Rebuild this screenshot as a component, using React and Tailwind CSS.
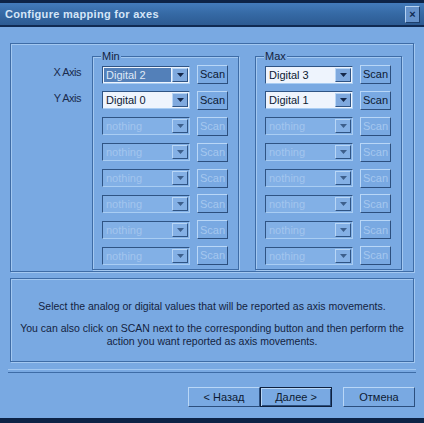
import React from 'react';

const FONT = { fontFamily: '"Liberation Sans", Arial, sans-serif' };

const MIN_ROWS = ['Digital 2', 'Digital 0', null, null, null, null, null, null];
const MAX_ROWS = ['Digital 3', 'Digital 1', null, null, null, null, null, null];

function Arrow({ faded }) {
  return (
    <svg width="7" height="4" viewBox="0 0 7 4">
      <path d="M0 0h7L3.5 4z" fill={faded ? '#3d5f8c' : '#15284a'} />
    </svg>
  );
}

function Combo({ value, selected }) {
  const enabled = value !== null;
  return (
    <div
      className={
        'flex h-[18px] w-[88px] items-stretch border border-t-[#2f5484] border-l-[#2f5484] border-r-[#a9cdf3] border-b-[#a9cdf3] ' +
        (enabled ? 'bg-[#eef4fd]' : 'bg-[#82b0e6]')
      }
    >
      <div className="flex flex-1 items-center py-[1px] pl-[1px]">
        {enabled ? (
          <span
            className={
              'flex h-full items-center px-[2px] text-[11px] leading-[14px] ' +
              (selected ? 'flex-1 bg-[#5380b9] text-[#dfe9f7]' : 'text-[#0d1a33]')
            }
          >
            {value}
          </span>
        ) : (
          <span className="px-[2px] text-[11px] leading-[14px] text-[#a2c5ee]">nothing</span>
        )}
      </div>
      <div
        className={
          'm-[1px] flex w-[16px] items-center justify-center border border-t-[#b8d6f6] border-l-[#b8d6f6] border-r-[#2f5484] border-b-[#2f5484] ' +
          (enabled ? 'bg-[#7fa9de]' : 'bg-[#84b0e5]')
        }
      >
        <Arrow faded={!enabled} />
      </div>
    </div>
  );
}

function ScanButton({ enabled }) {
  return (
    <div
      className={
        'flex h-[19px] w-[31px] items-center justify-center border border-t-[#b9d7f7] border-l-[#b9d7f7] border-r-[#2c4f7e] border-b-[#2c4f7e] text-[11px] ' +
        (enabled ? 'text-[#0d1a33]' : 'text-[#a5c7ef]')
      }
    >
      Scan
    </div>
  );
}

function Group({ title, rows }) {
  return (
    <div className="relative h-[214px] w-[147px] border border-[#3e6ca6] shadow-[inset_1px_1px_0_#a3c8f1,1px_1px_0_#a3c8f1]">
      <span className="absolute -top-[8px] left-[8px] bg-[#79a9e2] px-[1px] text-[11px] leading-[14px] text-[#13233f]">
        {title}
      </span>
      <div className="flex flex-col gap-[6.9px] pl-[9px] pt-[8px]">
        {rows.map((v, i) => (
          <div key={i} className="flex items-center gap-[7px]">
            <Combo value={v} selected={i === 0 && title === 'Min'} />
            <ScanButton enabled={v !== null} />
          </div>
        ))}
      </div>
    </div>
  );
}

function DialogButton({ label, focused }) {
  return (
    <div
      className={
        'flex h-[20px] w-[72px] items-center justify-center text-[11px] text-[#0d1a33] ' +
        (focused
          ? 'border border-[#0f213f] shadow-[inset_1px_1px_0_#b9d7f7,inset_-1px_-1px_0_#2c4f7e]'
          : 'border border-t-[#b9d7f7] border-l-[#b9d7f7] border-r-[#2c4f7e] border-b-[#2c4f7e]')
      }
    >
      {label}
    </div>
  );
}

export default function App() {
  return (
    <div className="flex h-[423px] w-[424px] flex-col overflow-hidden bg-[#79a9e2]" style={FONT}>
      {/* title bar */}
      <div className="flex h-[27px] items-center justify-between border-t-[3px] border-b-[2px] border-t-[#0d2346] border-b-[#102a52] bg-gradient-to-b from-[#437bbb] via-[#3569a4] to-[#2d5b93] pl-[5px] pr-[4px]">
        <span className="text-[11px] font-bold tracking-[0.3px] text-[#d5e6f8]">Configure mapping for axes</span>
        <div className="flex h-[17px] w-[15px] items-center justify-center border border-t-[#b5d2f2] border-l-[#b5d2f2] border-r-[#1d3f6c] border-b-[#1d3f6c] bg-[#6592cb] text-[11px] font-bold leading-none text-[#0f2a52]">
          ×
        </div>
      </div>

      {/* axes mapping area */}
      <div className="ml-[10px] mt-[16px] h-[229px] w-[404px] border border-[#3e6ca6] shadow-[inset_1px_1px_0_#a3c8f1,1px_1px_0_#a3c8f1]">
        <div className="flex pt-[12px]">
          <div className="flex w-[81px] flex-col items-end gap-[13px] pr-[11px] pt-[10px] text-[11px] leading-[13px] tracking-[-0.5px] text-[#1a2c4e]">
            <span>X Axis</span>
            <span>Y Axis</span>
          </div>
          <Group title="Min" rows={MIN_ROWS} />
          <div className="w-[16px]" />
          <Group title="Max" rows={MAX_ROWS} />
        </div>
      </div>

      {/* help text */}
      <div className="ml-[10px] mt-[6px] flex h-[84px] w-[404px] flex-col items-center border border-[#3e6ca6] pt-[21px] text-center text-[10.5px] leading-[13px] text-[#13233f] shadow-[inset_1px_1px_0_#a3c8f1,1px_1px_0_#a3c8f1]">
        <p>Select the analog or digital values that will be reported as axis movements.</p>
        <p className="mt-[9px]">
          You can also click on SCAN next to the corresponding button and then perform the
          <br />
          action you want reported as axis movements.
        </p>
      </div>

      {/* separator */}
      <div className="ml-[8px] mt-[7px] h-[4px] w-[408px] border-t border-b border-t-[#a3c8f1] border-b-[#3e6ca6]" />

      {/* dialog buttons */}
      <div className="mt-[14px] flex justify-end pr-[9px]">
        <DialogButton label="< Назад" />
        <DialogButton label="Далее >" focused />
        <div className="w-[11px]" />
        <DialogButton label="Отмена" />
      </div>

      <div className="mt-auto h-[5px] bg-[#0d2346]" />
    </div>
  );
}
